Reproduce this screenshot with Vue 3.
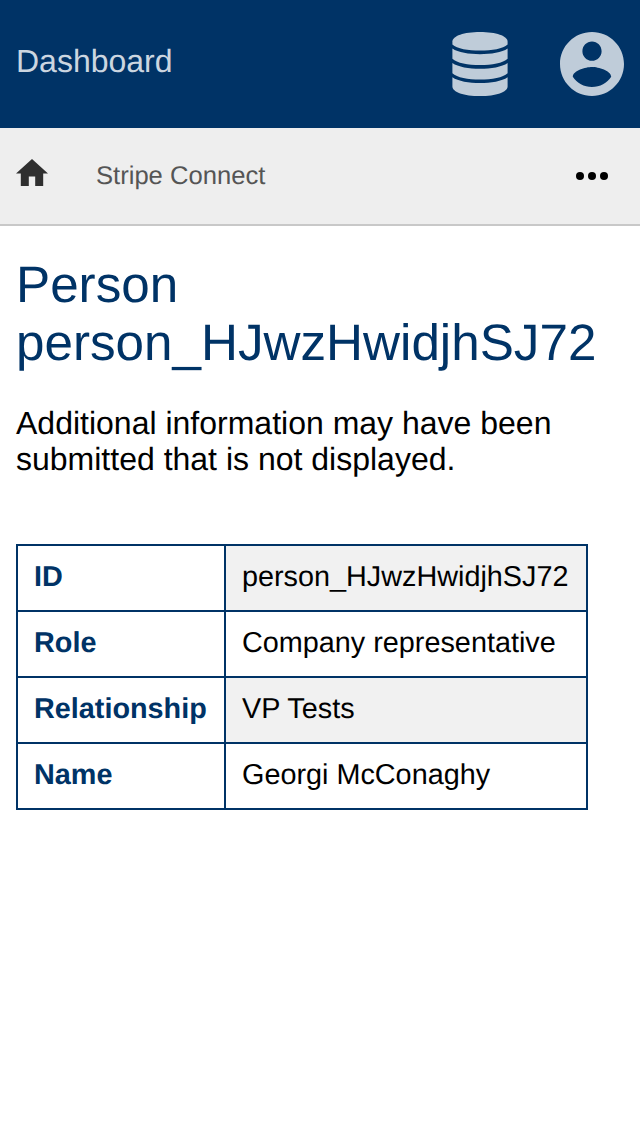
<script setup>
const rows = [
  ['ID', 'person_HJwzHwidjhSJ72'],
  ['Role', 'Company representative'],
  ['Relationship', 'VP Tests'],
  ['Name', 'Georgi McConaghy'],
]
</script>

<template>
  <div class="page">
    <header class="topbar">
      <a class="brand">Dashboard</a>
      <nav class="actions">
        <svg viewBox="0 0 56 64" width="56" height="64">
          <path d="M.4 9.6C.4 4 12 0 28 0S55.6 4 55.6 9.6V12.4C51 16.6 40 18.6 28 18.6S5 16.6 .4 12.4Z" />
          <path d="M.4 16.5C6 20.5 17 22.2 28 22.2S50 20.5 55.6 16.5V26.7C51 31 40 33 28 33S5 31 .4 26.7Z" />
          <path d="M.4 30.9C6 34.9 17 36.7 28 36.7S50 34.9 55.6 30.9V41.2C51 45.5 40 47.5 28 47.5S5 45.5 .4 41.2Z" />
          <path d="M.4 45.3C6 49.3 17 51.1 28 51.1S50 49.3 55.6 45.3V54.4C55.6 60 44 64 28 64S.4 60 .4 54.4Z" />
        </svg>
        <svg viewBox="2 2 20 20" width="64" height="64">
          <path d="M12 2C6.48 2 2 6.48 2 12s4.48 10 10 10 10-4.48 10-10S17.52 2 12 2zm0 3c1.66 0 3 1.34 3 3s-1.34 3-3 3-3-1.34-3-3 1.34-3 3-3zm0 14.2c-2.5 0-4.71-1.28-6-3.22.03-1.99 4-3.08 6-3.08 1.99 0 5.97 1.09 6 3.08-1.29 1.94-3.5 3.22-6 3.22z" />
        </svg>
      </nav>
    </header>
    <nav class="subbar">
      <svg class="home" viewBox="2 3 20 17" width="32" height="27.2">
        <path d="M10 20v-6h4v6h5v-8h3L12 3 2 12h3v8z" />
      </svg>
      <a class="crumb">Stripe Connect</a>
      <svg class="more" viewBox="0 0 32 8" width="32" height="8">
        <circle cx="4" cy="4" r="4" /><circle cx="16" cy="4" r="4" /><circle cx="28" cy="4" r="4" />
      </svg>
    </nav>
    <main>
      <h1>Person person_HJwzHwidjhSJ72</h1>
      <p>Additional information may have been submitted that is not displayed.</p>
      <table>
        <tbody>
          <tr v-for="[label, value] in rows" :key="label">
            <th>{{ label }}</th>
            <td>{{ value }}</td>
          </tr>
        </tbody>
      </table>
    </main>
  </div>
</template>

<style>
body { background: #fff; }
</style>

<style scoped>
.page { min-height: 1136px; font-family: "Liberation Sans", Arial, sans-serif; color: #000; text-rendering: geometricPrecision; }
.topbar { display: flex; justify-content: space-between; height: 128px; box-sizing: border-box; padding: 32px 16px; background: #036; color: #ccd6e0; }
.brand { font-size: 32px; line-height: 58px; }
.actions { display: flex; gap: 52px; }
.actions svg { display: block; fill: #bfccd9; }
.subbar { display: flex; align-items: center; height: 98px; box-sizing: border-box; padding: 0 32px 0 16px; border-bottom: 2px solid #c8c8c8; background: #eee; }
.home { fill: #2f2f2f; margin-bottom: 7px; }
.crumb { margin-left: 48px; font-size: 25.6px; line-height: 30px; color: #555; }
.more { margin-left: auto; }
main { padding: 30px 16px 0; }
h1 { margin: 0; font-size: 51.2px; line-height: 58px; font-weight: 400; color: #036; }
p { margin: 33px 0 67px; font-size: 32px; line-height: 36px; }
table { width: 572px; table-layout: fixed; border-collapse: collapse; font-size: 28.8px; line-height: 32px; }
th, td { padding: 15px 16px 17px; border: 2px solid #036; text-align: left; white-space: nowrap; }
th { width: 208px; box-sizing: border-box; color: #036; }
tr:nth-child(odd) td { background: #f1f1f1; }
</style>
